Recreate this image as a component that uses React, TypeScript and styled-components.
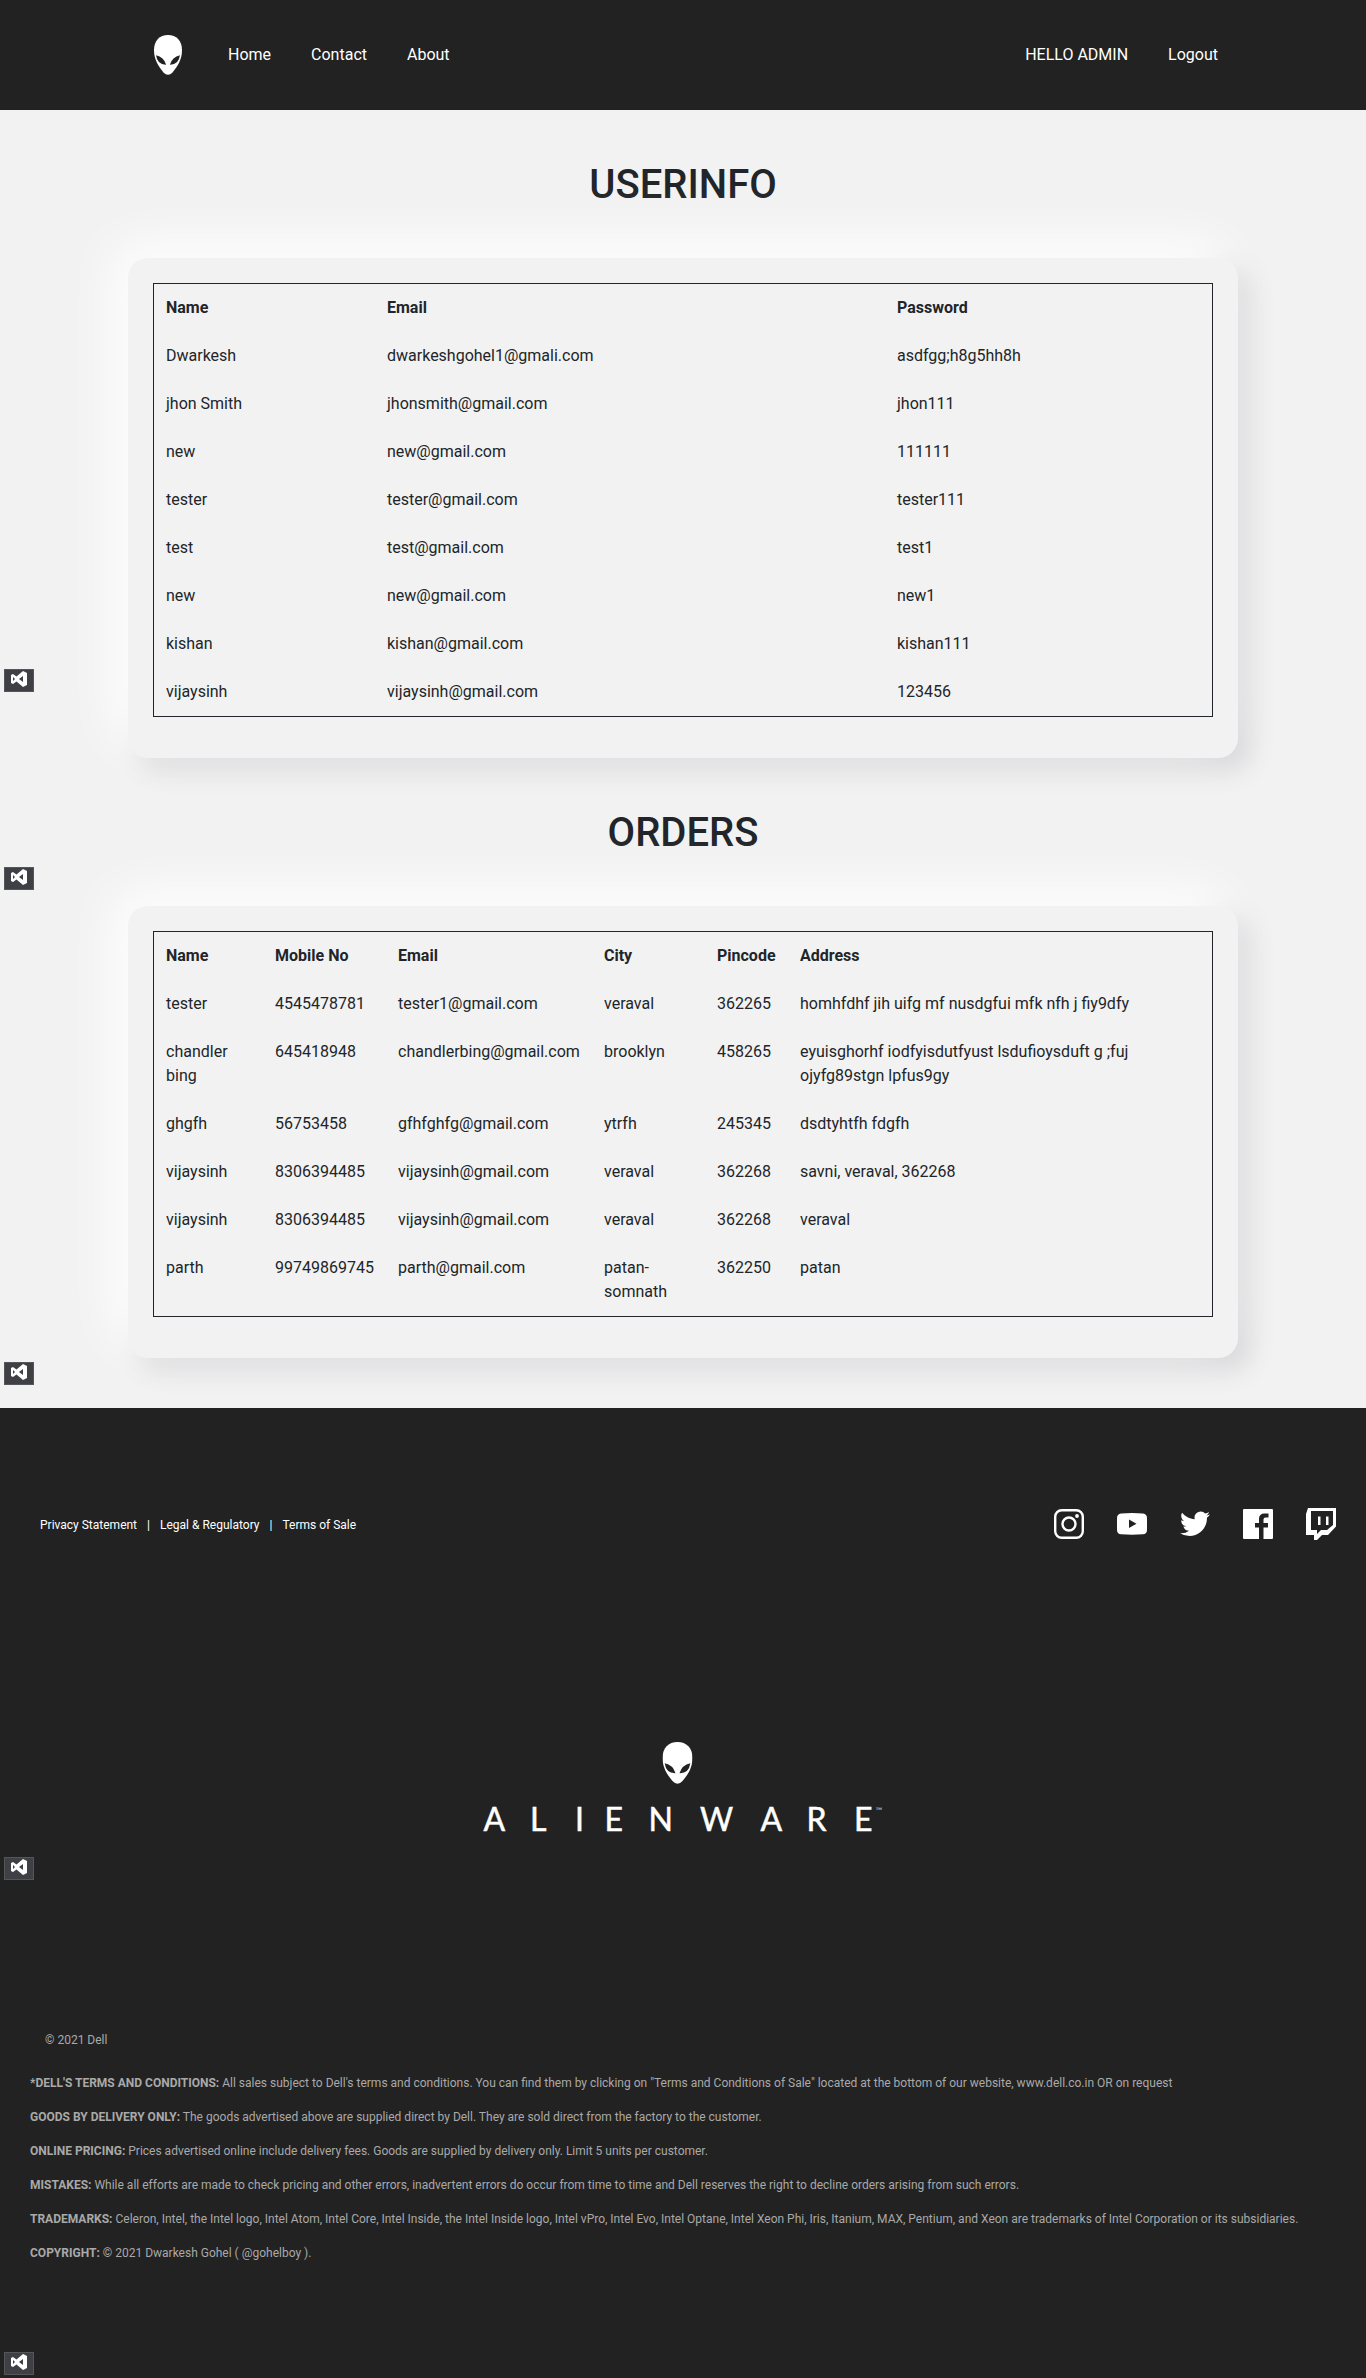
import React from "react";
import styled, { createGlobalStyle } from "styled-components";

const GlobalStyle = createGlobalStyle`
  *, *::before, *::after { box-sizing: border-box; }
  body {
    margin: 0;
    background: #f2f2f2;
    color: #212529;
    font: 400 16px/1.5 Roboto, "Liberation Sans", sans-serif;
  }
`;

const Page = styled.div`
  position: relative;
  width: 1366px;
  height: 2378px;
  display: flex;
  flex-direction: column;
  overflow: hidden;
`;

const Header = styled.header`
  height: 110px;
  flex: none;
  background: #222;
  display: flex;
  align-items: center;
  padding: 0 148px 0 154px;
`;

const HeaderLogo = styled.div`
  display: flex;
  margin-right: 46px;
`;

const Nav = styled.nav`
  display: flex;
  gap: 40px;
  & + & { margin-left: auto; }
`;

const NavLink = styled.a`
  color: #fff;
`;

const Section = styled.section`
  display: flex;
  flex-direction: column;
  align-items: center;
  padding-top: 51px;
`;

const Title = styled.h1`
  margin: 0 0 49px;
  font-size: 40px;
  font-weight: 500;
  line-height: 48px;
`;

const Card = styled.div`
  width: 1110px;
  padding: 25px 25px 41px;
  border-radius: 20px;
  background: #f2f2f2;
  box-shadow: -15px -15px 50px #ffffff, 11px 11px 26px #d4d4d7;
`;

const Table = styled.table<{ $widths: number[] }>`
  width: 1060px;
  table-layout: fixed;
  border-collapse: separate;
  border-spacing: 0;
  border: 1px solid #212529;
  ${(p) => p.$widths.map((w, i) => `th:nth-child(${i + 1}) { width: ${w}px; }`).join("\n")}
`;

const HeadCell = styled.th`
  padding: 12px;
  text-align: left;
  font-weight: 700;
`;

const Cell = styled.td`
  padding: 12px;
  vertical-align: top;
  white-space: pre-line;
`;

const Footer = styled.footer`
  position: relative;
  flex: 1;
  margin-top: 50px;
  background: #222;
  display: flex;
  flex-direction: column;
`;

const FooterBar = styled.div`
  height: 60px;
  margin-top: 86px;
  padding: 0 30px 0 40px;
  display: flex;
  justify-content: space-between;
  align-items: center;
`;

const FooterLinks = styled.div`
  display: flex;
  gap: 10px;
  padding-top: 2px;
  color: #fff;
  font-size: 12px;
`;

const Socials = styled.div`
  display: flex;
  gap: 33px;
`;

const Brand = styled.div`
  display: flex;
  justify-content: center;
  margin-top: 188px;
  padding-left: 2px;
`;

const BrandName = styled.text`
  font-family: Lato, "Liberation Sans", sans-serif;
  font-size: 32px;
  fill: #fff;
  stroke: #fff;
  stroke-width: 0.5px;
`;

const TradeMark = styled.text`
  font-family: Lato, "Liberation Sans", sans-serif;
  font-size: 9px;
  fill: #ccc;
`;

const Legal = styled.div`
  margin-top: 183px;
  padding-left: 30px;
  color: #a9a9a9;
  font-size: 12px;
  line-height: 18px;
`;

const Copyright = styled.p`
  margin: 0 0 25px 15px;
`;

const Term = styled.p`
  margin: 0 0 16px;
`;

const Badge = styled.div<{ $top: number }>`
  position: absolute;
  left: 4px;
  top: ${(p) => p.$top}px;
  width: 30px;
  height: 23px;
  background: #3f3f46;
  border: 1px solid #55555a;
`;

function Alien({ width, height }: { width: number; height: number }) {
  return (
    <svg width={width} height={height} viewBox="0 0 30 42" preserveAspectRatio="none">
      <path fill="#fff" d="M15 0C24 0 30 6 30 16C30 26 25 33 20 39Q15 44.500 10 39C5 33 0 26 0 16C0 6 6 0 15 0Z" />
      <path fill="#222" d="M2.200 21.300Q10.500 23 13 31.200Q3.600 31.500 2.200 21.300ZM27.800 21.300Q19.500 23 17 31.200Q26.400 31.500 27.800 21.300Z" />
    </svg>
  );
}

function Wordmark() {
  return (
    <svg width="402" height="106" viewBox="0 0 402 106" overflow="visible">
      <g transform="translate(179.500 0)">
        <Alien width={30} height={42} />
      </g>
      <BrandName x="0.500 47 92 121.500 165.500 217 277.500 323.500 371" y="89">ALIENWARE</BrandName>
      <TradeMark x="392.500" y="71.500">™</TradeMark>
    </svg>
  );
}

const Icon = styled.svg.attrs({ width: 30, height: 32, viewBox: "0 0 30 32", fill: "#fff" })``;

const userHead = ["Name", "Email", "Password"];
const users = [
  ["Dwarkesh", "dwarkeshgohel1@gmali.com", "asdfgg;h8g5hh8h"],
  ["jhon Smith", "jhonsmith@gmail.com", "jhon111"],
  ["new", "new@gmail.com", "111111"],
  ["tester", "tester@gmail.com", "tester111"],
  ["test", "test@gmail.com", "test1"],
  ["new", "new@gmail.com", "new1"],
  ["kishan", "kishan@gmail.com", "kishan111"],
  ["vijaysinh", "vijaysinh@gmail.com", "123456"],
];

const orderHead = ["Name", "Mobile No", "Email", "City", "Pincode", "Address"];
const orders = [
  ["tester", "4545478781", "tester1@gmail.com", "veraval", "362265", "homhfdhf jih uifg mf nusdgfui mfk nfh j fiy9dfy"],
  ["chandler\nbing", "645418948", "chandlerbing@gmail.com", "brooklyn", "458265", "eyuisghorhf iodfyisdutfyust lsdufioysduft g ;fuj\nojyfg89stgn lpfus9gy"],
  ["ghgfh", "56753458", "gfhfghfg@gmail.com", "ytrfh", "245345", "dsdtyhtfh fdgfh"],
  ["vijaysinh", "8306394485", "vijaysinh@gmail.com", "veraval", "362268", "savni, veraval, 362268"],
  ["vijaysinh", "8306394485", "vijaysinh@gmail.com", "veraval", "362268", "veraval"],
  ["parth", "99749869745", "parth@gmail.com", "patan-\nsomnath", "362250", "patan"],
];

const terms = [
  ["*DELL'S TERMS AND CONDITIONS:", "All sales subject to Dell's terms and conditions. You can find them by clicking on \"Terms and Conditions of Sale\" located at the bottom of our website, www.dell.co.in OR on request"],
  ["GOODS BY DELIVERY ONLY:", "The goods advertised above are supplied direct by Dell. They are sold direct from the factory to the customer."],
  ["ONLINE PRICING:", "Prices advertised online include delivery fees. Goods are supplied by delivery only. Limit 5 units per customer."],
  ["MISTAKES:", "While all efforts are made to check pricing and other errors, inadvertent errors do occur from time to time and Dell reserves the right to decline orders arising from such errors."],
  ["TRADEMARKS:", "Celeron, Intel, the Intel logo, Intel Atom, Intel Core, Intel Inside, the Intel Inside logo, Intel vPro, Intel Evo, Intel Optane, Intel Xeon Phi, Iris, Itanium, MAX, Pentium, and Xeon are trademarks of Intel Corporation or its subsidiaries."],
  ["COPYRIGHT:", "© 2021 Dwarkesh Gohel ( @gohelboy )."],
];

function DataTable({ head, rows, widths }: { head: string[]; rows: string[][]; widths: number[] }) {
  return (
    <Card>
      <Table $widths={widths}>
        <thead>
          <tr>{head.map((h) => <HeadCell key={h}>{h}</HeadCell>)}</tr>
        </thead>
        <tbody>
          {rows.map((row, i) => (
            <tr key={i}>{row.map((c, j) => <Cell key={j}>{c}</Cell>)}</tr>
          ))}
        </tbody>
      </Table>
    </Card>
  );
}

export default function App() {
  return (
    <Page>
      <GlobalStyle />
      <Header>
        <HeaderLogo><Alien width={28} height={40} /></HeaderLogo>
        <Nav>
          <NavLink>Home</NavLink>
          <NavLink>Contact</NavLink>
          <NavLink>About</NavLink>
        </Nav>
        <Nav>
          <NavLink>HELLO ADMIN</NavLink>
          <NavLink>Logout</NavLink>
        </Nav>
      </Header>
      <Section>
        <Title>USERINFO</Title>
        <DataTable head={userHead} rows={users} widths={[221, 510, 327]} />
      </Section>
      <Section>
        <Title>ORDERS</Title>
        <DataTable head={orderHead} rows={orders} widths={[109, 123, 206, 113, 83, 424]} />
      </Section>
      <Footer>
        <FooterBar>
          <FooterLinks>
            <span>Privacy Statement</span>
            <span>|</span>
            <span>Legal &amp; Regulatory</span>
            <span>|</span>
            <span>Terms of Sale</span>
          </FooterLinks>
          <Socials>
            <Icon>
              <rect x="1.200" y="2.200" width="27.600" height="27.600" rx="6.500" fill="none" stroke="#fff" strokeWidth="2.400" />
              <circle cx="15" cy="16" r="6.500" fill="none" stroke="#fff" strokeWidth="2.400" />
              <circle cx="23" cy="8" r="1.900" />
            </Icon>
            <Icon>
              <path fillRule="evenodd" d="M4 5.500Q15 4.500 26 5.500Q30 6 30 10V22Q30 26 26 26.300Q15 27 4 26.300Q0 26 0 22V10Q0 6 4 5.500ZM12 11.500V20L19.500 15.700Z" />
            </Icon>
            <Icon>
              <path transform="translate(0 .8) scale(1.250)" d="M23.950 4.570a10 10 0 0 1-2.820.78 4.960 4.960 0 0 0 2.160-2.730 9.900 9.900 0 0 1-3.130 1.190 4.920 4.920 0 0 0-8.380 4.480C7.690 8.100 4.070 6.130 1.640 3.160a4.820 4.820 0 0 0-.67 2.480c0 1.710.87 3.210 2.190 4.100a4.900 4.900 0 0 1-2.230-.62v.06a4.920 4.920 0 0 0 3.950 4.830 5 5 0 0 1-2.210.08 4.940 4.940 0 0 0 4.600 3.420A9.870 9.870 0 0 1 0 19.540a13.990 13.990 0 0 0 7.550 2.210c9.050 0 14-7.500 14-13.980 0-.21 0-.42-.02-.63a9.940 9.940 0 0 0 2.460-2.550z" />
            </Icon>
            <Icon>
              <path d="M1 1H29Q30 1 30 2V30Q30 31 29 31H20.500V19.500H25V15H20.500V11.500Q20.500 9.500 22.500 9.500H25.500V5.500H21.500Q16 5.500 16 11V15H12V19.500H16V31H1Q0 31 0 30V2Q0 1 1 1Z" />
            </Icon>
            <Icon>
              <path fillRule="evenodd" d="M2 0H30V18.500L22 27H16L11 32H8V27H0V6ZM5 3V22H11V26L15 22H21L27 17V3ZM12 8.500H14.500V17H12ZM20 8.500H22.500V17H20Z" />
            </Icon>
          </Socials>
        </FooterBar>
        <Brand><Wordmark /></Brand>
        <Legal>
          <Copyright>© 2021 Dell</Copyright>
          {terms.map(([label, text]) => (
            <Term key={label}><b>{label}</b> {text}</Term>
          ))}
        </Legal>
      </Footer>
      {[669, 867, 1362, 1857, 2352].map((top) => (
        <Badge key={top} $top={top}>
          <svg width="28" height="21" viewBox="0 0 28 21">
            <path fill="#fff" fillRule="evenodd" d="M18 1L22 3V15L18 17L11.500 11.500L8 14L6 13V5L8 4L11.500 6.500ZM18 6L14 9L18 12ZM8 7V11L10 9Z" />
          </svg>
        </Badge>
      ))}
    </Page>
  );
}
